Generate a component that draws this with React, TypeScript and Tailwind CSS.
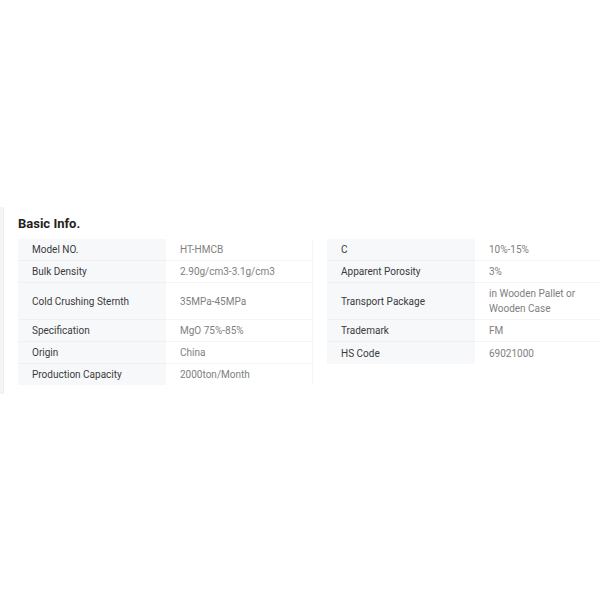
const ROWS: [string, string, string?, string?][] = [
  ["Model NO.", "HT-HMCB", "C", "10%-15%"],
  ["Bulk Density", "2.90g/cm3-3.1g/cm3", "Apparent Porosity", "3%"],
  ["Cold Crushing Sternth", "35MPa-45MPa", "Transport Package", "in Wooden Pallet or Wooden Case"],
  ["Specification", "MgO 75%-85%", "Trademark", "FM"],
  ["Origin", "China", "HS Code", "69021000"],
  ["Production Capacity", "2000ton/Month"],
];

function LabelCell({ text, last }: { text: string; last: boolean }) {
  return (
    <div
      className={
        "bg-[#f7f8fa] px-[14px] py-[3px] leading-[15px] text-[#3a3a3a] flex items-center " +
        (last ? "" : "border-b border-[#eef0f3]")
      }
    >
      {text}
    </div>
  );
}

function ValueCell({ text, last }: { text: string; last: boolean }) {
  return (
    <div
      className={
        "px-[14px] py-[3px] leading-[15px] text-[#808080] flex items-center border-r border-[#f4f5f7] " +
        (last ? "" : "border-b border-[#eef0f3]")
      }
    >
      {text}
    </div>
  );
}

export default function App() {
  return (
    <div
      className="w-[600px] h-[600px] overflow-hidden bg-white text-[10px]"
      style={{ fontFamily: "Roboto, 'Liberation Sans', sans-serif" }}
    >
      <div className="mt-[207px] w-[640px] flex">
        <div className="w-[4px] bg-[#f3f4f6] border-r border-[#eceef1]" />
        <div className="flex-1 px-[14px] pt-[9px] pb-[9px]">
          <h2 className="text-[13px] font-bold text-[#222] leading-[16px] mb-[7px]">
            Basic Info.
          </h2>
          <div className="grid grid-cols-[148px_147px_14px_148px_147px]">
            {ROWS.map(([l1, v1, l2, v2], i) => {
              const lastLeft = i === ROWS.length - 1;
              const lastRight = i === ROWS.length - 2;
              return (
                <div key={l1} className="contents">
                  <LabelCell text={l1} last={lastLeft} />
                  <ValueCell text={v1} last={lastLeft} />
                  <div />
                  {l2 ? <LabelCell text={l2} last={lastRight} /> : <div />}
                  {v2 ? <ValueCell text={v2} last={lastRight} /> : <div />}
                </div>
              );
            })}
          </div>
        </div>
      </div>
    </div>
  );
}
